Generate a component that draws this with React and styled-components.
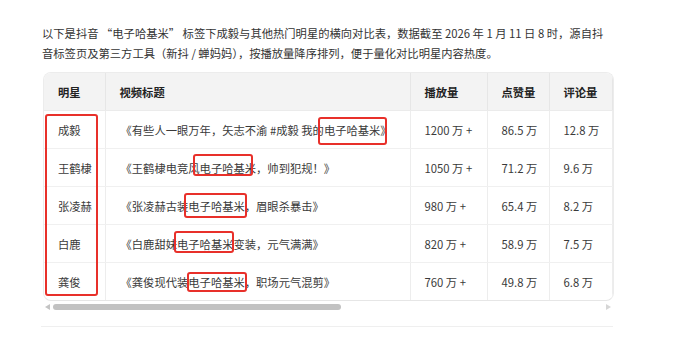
import React from "react";
import styled, { createGlobalStyle } from "styled-components";

const Global = createGlobalStyle`
  html, body { margin: 0; padding: 0; background: #fff; }
  body { font-family: "Noto Sans CJK SC", "Noto Sans", sans-serif; color: #333; }
`;

const Page = styled.div`
  position: relative;
  width: 680px;
  height: 341px;
  overflow: hidden;
  padding: 24px 0 0 42px;
  box-sizing: border-box;
`;

const Intro = styled.p`
  margin: 0;
  font-size: 11.3px;
  line-height: 19.5px;
  color: #333;
  white-space: nowrap;
`;

const TableWrap = styled.div`
  margin-top: 9px;
  margin-left: 1px;
  width: 571px;
  border: 1px solid #ececec;
  border-bottom-color: #e6e6e6;
  border-radius: 8px;
  overflow: hidden;
  box-sizing: border-box;
`;

const Table = styled.table`
  border-collapse: collapse;
  table-layout: fixed;
  width: 650px;
  font-size: 11.3px;
  color: #333;
`;

const Th = styled.th`
  height: 37px;
  padding: 0 14px;
  text-align: left;
  font-weight: 700;
  background: #f3f3f3;
  border-right: 1px solid #e6e6e6;
  border-bottom: 1px solid #ebebeb;
  white-space: nowrap;
  color: #222;
`;

const Td = styled.td`
  height: 37px;
  padding: 0 ${(p) => (p.$title ? "15px" : "14px")};
  border-right: 1px solid #ededed;
  border-bottom: 1px solid #f0f0f0;
  white-space: nowrap;
  overflow: hidden;
  color: #3a3a3a;
  tr:last-child > & { border-bottom: none; }
`;

const ScrollBar = styled.div`
  display: flex;
  align-items: center;
  width: 572px;
  height: 10px;
  margin-top: 1px;
  gap: 3px;
`;

const Arrow = styled.span`
  width: 0;
  height: 0;
  border-top: 3.5px solid transparent;
  border-bottom: 3.5px solid transparent;
  ${(p) =>
    p.$dir === "left"
      ? "border-right: 5px solid #c4c4c4; margin-left: 3px;"
      : "border-left: 5px solid #d6d6d6; margin-right: 3px;"}
`;

const Track = styled.div`
  flex: 1;
  height: 6px;
  display: flex;
`;

const Thumb = styled.div`
  height: 6px;
  border-radius: 3px;
  background: #c2c2c2;
`;

const Divider = styled.div`
  width: 572px;
  height: 1px;
  background: #efefef;
  margin-top: 14px;
  margin-left: -1px;
`;

const Mark = styled.div`
  position: absolute;
  border: 2px solid #e8302a;
  border-radius: 3px;
  box-sizing: border-box;
  pointer-events: none;
`;

const cols = [61, 305, 77, 62, 63, 82];
const rows = [
  ["成毅", "《有些人一眼万年，矢志不渝 #成毅 我的电子哈基米》", "1200 万 +", "86.5 万", "12.8 万"],
  ["王鹤棣", "《王鹤棣电竞风电子哈基米，帅到犯规！》", "1050 万 +", "71.2 万", "9.6 万"],
  ["张凌赫", "《张凌赫古装电子哈基米，眉眼杀暴击》", "980 万 +", "65.4 万", "8.2 万"],
  ["白鹿", "《白鹿甜妹电子哈基米变装，元气满满》", "820 万 +", "58.9 万", "7.5 万"],
  ["龚俊", "《龚俊现代装电子哈基米，职场元气混剪》", "760 万 +", "49.8 万", "6.8 万"],
];
const marks = [
  { l: 45, t: 114, w: 53, h: 182 },
  { l: 318, t: 117, w: 69, h: 28 },
  { l: 193, t: 154, w: 60, h: 22 },
  { l: 184, t: 193, w: 63, h: 25 },
  { l: 174, t: 231, w: 60, h: 22 },
  { l: 187, t: 272, w: 60, h: 20 },
];

export default function App() {
  return (
    <>
      <Global />
      <Page>
        <Intro>
          以下是抖音 “电子哈基米” 标签下成毅与其他热门明星的横向对比表，数据截至 2026 年 1 月 11 日 8 时，源自抖
          <br />
          音标签页及第三方工具（新抖 / 蝉妈妈），按播放量降序排列，便于量化对比明星内容热度。
        </Intro>
        <TableWrap>
          <Table>
            <colgroup>
              {cols.map((w, i) => (
                <col key={i} style={{ width: w }} />
              ))}
            </colgroup>
            <thead>
              <tr>
                <Th>明星</Th>
                <Th>视频标题</Th>
                <Th>播放量</Th>
                <Th>点赞量</Th>
                <Th>评论量</Th>
                <Th />
              </tr>
            </thead>
            <tbody>
              {rows.map((r, i) => (
                <tr key={i}>
                  {r.map((c, j) => (
                    <Td key={j} $title={j === 1}>{c}</Td>
                  ))}
                  <Td />
                </tr>
              ))}
            </tbody>
          </Table>
        </TableWrap>
        <ScrollBar>
          <Arrow $dir="left" />
          <Track>
            <Thumb style={{ width: 288 }} />
          </Track>
          <Arrow $dir="right" />
        </ScrollBar>
        <Divider />
        {marks.map((m, i) => (
          <Mark key={i} style={{ left: m.l, top: m.t, width: m.w, height: m.h }} />
        ))}
      </Page>
    </>
  );
}
